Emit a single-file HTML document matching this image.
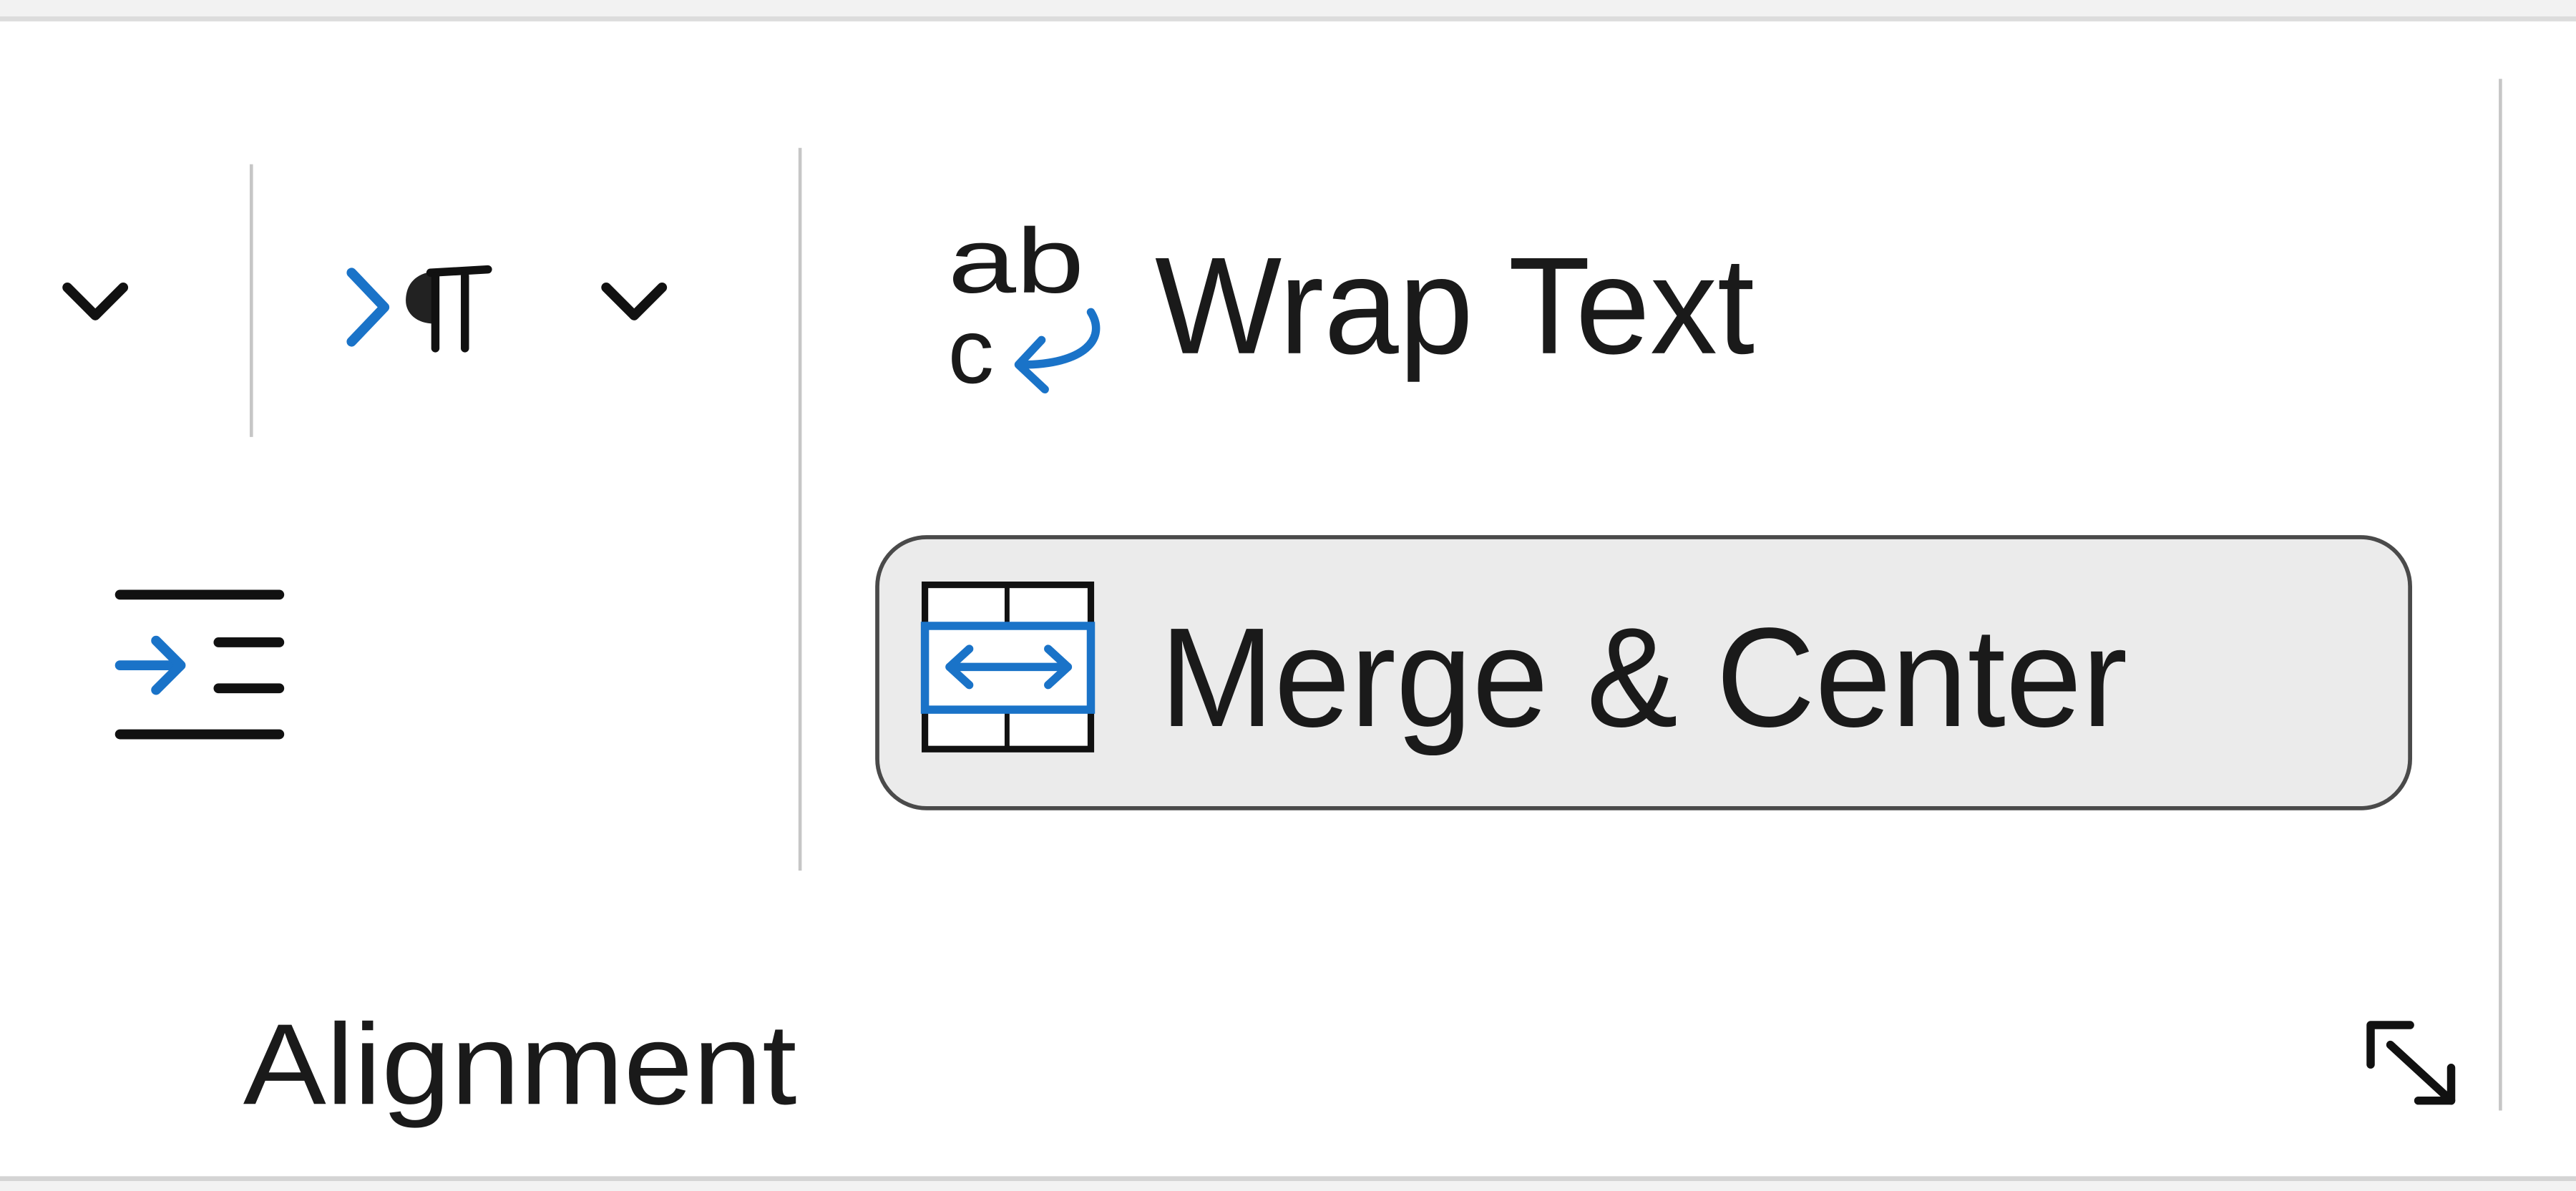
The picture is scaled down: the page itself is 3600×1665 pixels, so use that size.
<!DOCTYPE html>
<html><head><meta charset="utf-8"><style>
html,body{margin:0;padding:0;background:#fff;width:3600px;height:1665px;overflow:hidden}
svg{display:block}
text{font-family:"Liberation Sans","DejaVu Sans",sans-serif;fill:#1a1a1a}
</style></head><body>
<svg width="3600" height="1665" viewBox="0 0 1568 725" preserveAspectRatio="none" xmlns="http://www.w3.org/2000/svg">
<rect x="0" y="0" width="1568" height="725" fill="#fff"/>
<rect x="0" y="0" width="1568" height="10" fill="#f2f2f2"/>
<rect x="0" y="10" width="1568" height="3" fill="#dcdcdc"/>
<rect x="0" y="716" width="1568" height="3" fill="#d4d4d4"/>
<rect x="0" y="719" width="1568" height="6" fill="#f2f2f2"/>
<g stroke="#c6c6c6" stroke-width="2">
<line x1="153" y1="100" x2="153" y2="266"/>
<line x1="487" y1="90" x2="487" y2="530"/>
<line x1="1522" y1="48" x2="1522" y2="676"/>
</g>
<g fill="none" stroke="#111" stroke-width="6" stroke-linecap="round" stroke-linejoin="round">
<polyline points="41,175 58,192 75,175"/>
<polyline points="369,175 386,192 403,175"/>
<polyline points="1389,400 1405,416 1421,400"/>
</g>
<polyline points="214,166 234,187 214,208" fill="none" stroke="#1a73c8" stroke-width="6" stroke-linecap="round" stroke-linejoin="round"/>
<path d="M266,165 C251,166 247,175 247,183 C247,191 254,197 264,197 Z" fill="#222"/>
<g stroke="#111" stroke-width="5" stroke-linecap="round" fill="none">
<line x1="262" y1="166" x2="297" y2="164"/>
<line x1="265" y1="168" x2="265" y2="212"/>
<line x1="283" y1="168" x2="283" y2="212"/>
</g>
<g stroke="#111" stroke-width="6" stroke-linecap="round">
<line x1="73" y1="362" x2="170" y2="362"/>
<line x1="133" y1="391" x2="170" y2="391"/>
<line x1="133" y1="419" x2="170" y2="419"/>
<line x1="73" y1="447" x2="170" y2="447"/>
</g>
<g stroke="#1a73c8" stroke-width="6" stroke-linecap="round" stroke-linejoin="round" fill="none">
<line x1="73" y1="405" x2="108" y2="405"/>
<polyline points="95,390 110,405 95,420"/>
</g>
<text x="577" y="178" font-size="56" textLength="83" lengthAdjust="spacingAndGlyphs">ab</text>
<text x="577" y="233" font-size="56">c</text>
<g stroke="#1a73c8" stroke-width="5" stroke-linecap="round" stroke-linejoin="round" fill="none">
<path d="M664,190 C674,206 660,222 622,222"/>
<polyline points="634,207 620,222 636,237"/>
</g>
<text x="703" y="215" font-size="84" textLength="365" lengthAdjust="spacingAndGlyphs">Wrap Text</text>
<rect x="534" y="327" width="933" height="165" rx="30" fill="#ebebeb" stroke="#4a4a4a" stroke-width="2.5"/>
<rect x="563" y="356" width="101" height="100" fill="#fff" stroke="#111" stroke-width="4"/>
<line x1="613" y1="356" x2="613" y2="456" stroke="#111" stroke-width="3"/>
<rect x="563" y="381" width="101" height="51" fill="#fff" stroke="#1a73c8" stroke-width="5"/>
<g stroke="#1a73c8" stroke-width="5" stroke-linecap="round" stroke-linejoin="round" fill="none">
<line x1="578" y1="406" x2="650" y2="406"/>
<polyline points="590,395 578,406 590,417"/>
<polyline points="638,395 650,406 638,417"/>
</g>
<text x="706" y="442" font-size="86" textLength="589" lengthAdjust="spacingAndGlyphs">Merge &amp; Center</text>
<text x="148" y="672" font-size="70" textLength="337" lengthAdjust="spacingAndGlyphs">Alignment</text>
<g stroke="#111" stroke-width="5" stroke-linecap="round" stroke-linejoin="round" fill="none">
<polyline points="1443,648 1443,624 1467,624"/>
<line x1="1455" y1="636" x2="1492" y2="670"/>
<polyline points="1472,670 1492,670 1492,650"/>
</g>
</svg>
</body></html>
